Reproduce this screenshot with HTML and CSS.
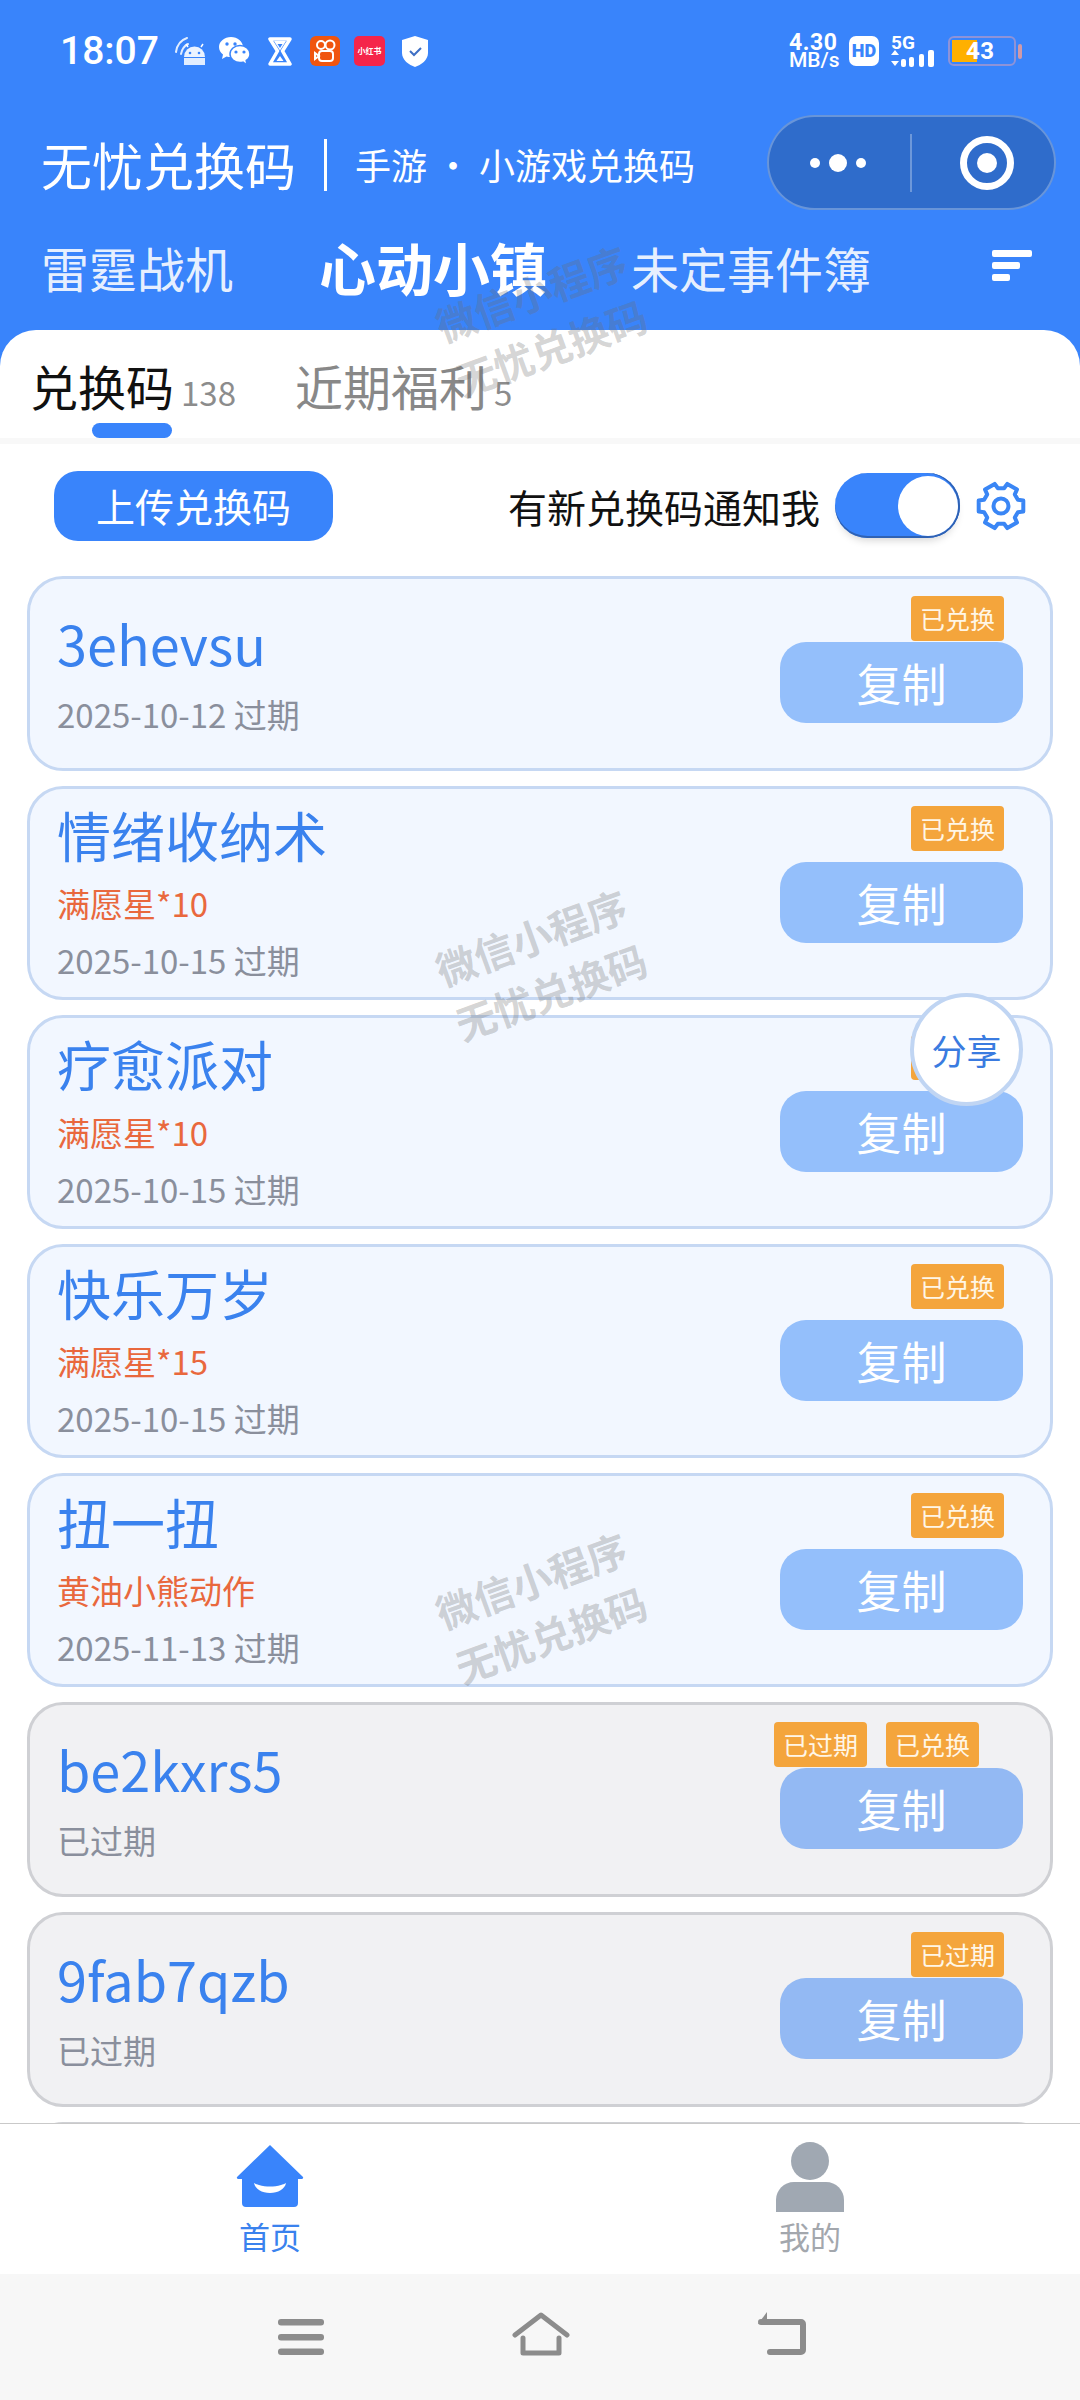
FILE: index.html
```html
<!DOCTYPE html>
<html lang="zh-CN">
<head>
<meta charset="utf-8">
<title>无忧兑换码</title>
<link rel="stylesheet" href="styles.css">
</head>
<body>
<div class="phone">
  <header class="top">
    <div class="status">
      <div class="status-left">
        <span class="time">18:07</span>
        <svg class="si si-droid" viewBox="0 0 31 29"><path d="M2 15C3 8 7 3 13 1M7 17C8 12 10 9 14 7" fill="none" stroke="#fff" stroke-width="2" stroke-linecap="round" opacity=".85"/><path d="M10 20a10.500 10.500 0 0 1 21 0z" fill="#fff" opacity=".9"/><path d="M10 21h21v7H10z" fill="#fff" opacity=".85"/><circle cx="16" cy="16" r="1.300" fill="#3984fb"/><circle cx="25" cy="16" r="1.300" fill="#3984fb"/><path d="M14 10l-2-3M27 10l2-3" stroke="#fff" stroke-width="1.500"/></svg>
        <svg class="si si-wechat" viewBox="0 0 31 30"><path d="M12 1C5.500 1 0 5.500 0 11c0 3 1.600 5.600 4 7.400L3 23l4.500-2.500c1.500.4 3 .6 4.500.6 6.500 0 12-4.500 12-10S18.500 1 12 1z" fill="#fff"/><circle cx="8" cy="8" r="1.700" fill="#3984fb"/><circle cx="16" cy="8" r="1.700" fill="#3984fb"/><path d="M21 9.500c-5.500 0-10 3.800-10 8.500s4.500 8.500 10 8.500c1 0 2-.1 3-.4L28 29l-.8-4.500c2.300-1.500 3.800-3.900 3.800-6.500 0-4.700-4.500-8.500-10-8.500z" fill="#fff" stroke="#3984fb" stroke-width="1.500"/><circle cx="17" cy="16" r="1.600" fill="#3984fb"/><circle cx="25" cy="16" r="1.600" fill="#3984fb"/></svg>
        <svg class="si si-hour" viewBox="0 0 24 29"><path d="M2 2h20l-7.500 12L22 27H2l7.500-13z" fill="none" stroke="#fff" stroke-width="3.500" stroke-linejoin="round"/><path d="M6 4h12l-6 9.500z" fill="#fff"/><path d="M9.500 7h5L12 11z" fill="#3984fb"/><path d="M12 19l3.500 5h-7z" fill="#fff"/></svg>
        <svg class="si si-kwai" viewBox="0 0 30 30"><rect width="30" height="30" rx="6" fill="#f0550f"/><circle cx="11" cy="9" r="4" fill="none" stroke="#fff" stroke-width="2"/><circle cx="20" cy="9" r="4.500" fill="none" stroke="#fff" stroke-width="2"/><rect x="9" y="15" width="14" height="10" rx="3" fill="none" stroke="#fff" stroke-width="2"/><path d="M9 20l-4-3v6z" fill="none" stroke="#fff" stroke-width="2"/></svg>
        <span class="red-note">小红书</span>
        <svg class="si si-shield" viewBox="0 0 26 31"><path d="M13 0l13 4v13c0 7-7 12-13 14C7 29 0 24 0 17V4z" fill="#fff"/><path d="M8 15l4 4 7-7" fill="none" stroke="#3e6fc4" stroke-width="2"/></svg>
      </div>
      <div class="status-right">
        <span class="speed"><b>4.30</b><i>MB/s</i></span>
        <span class="hd">HD</span>
        <span class="net">
          <b class="net-5g">5G</b>
          <svg class="net-bars" viewBox="0 0 44 17"><path d="M4 0l4 5H0zM4 16L0 11h8z" fill="#fff"/><rect x="10" y="9" width="5" height="8" rx="2" fill="#fff"/><rect x="18" y="7" width="5" height="10" rx="2" fill="#fff"/><rect x="28" y="4" width="5" height="13" rx="2" fill="#fff"/><rect x="37" y="0" width="6" height="17" rx="2" fill="#fff"/></svg>
        </span>
        <span class="battery"><span class="battery-fill"></span><span class="battery-num">43</span></span>
        <span class="battery-cap"></span>
      </div>
    </div>
    <div class="titlebar">
      <span class="app-name">无忧兑换码</span>
      <span class="app-sep"></span>
      <span class="app-sub">手游<span class="dot">・</span>小游戏兑换码</span>
      <div class="capsule">
        <svg class="cap-more" viewBox="0 0 70 20"><circle cx="12" cy="10" r="5" fill="#fff"/><circle cx="35" cy="10" r="9" fill="#fff"/><circle cx="58" cy="10" r="5" fill="#fff"/></svg>
        <span class="cap-sep"></span>
        <svg class="cap-target" viewBox="0 0 54 54"><circle cx="27" cy="27" r="23.500" fill="none" stroke="#fff" stroke-width="7"/><circle cx="27" cy="27" r="10" fill="#fff"/></svg>
      </div>
    </div>
    <nav class="games">
      <span class="game">雷霆战机</span>
      <span class="game game-on">心动小镇</span>
      <span class="game">未定事件簿</span>
      <svg class="sort" viewBox="0 0 40 32"><rect width="40" height="7" rx="2" fill="#fff"/><rect y="12" width="28" height="7" rx="2" fill="#fff"/><rect y="24" width="18" height="7" rx="2" fill="#fff"/></svg>
    </nav>
  </header>

  <main class="sheet">
    <div class="tabs">
      <div class="tab-first">
        <div class="tab-row"><span class="tab-label tab-label-on">兑换码</span><span class="tab-count">138</span></div>
        <span class="tab-bar"></span>
      </div>
      <div class="tab-row"><span class="tab-label">近期福利</span><span class="tab-count">5</span></div>
    </div>
    <div class="toolbar">
      <span class="upload">上传兑换码</span>
      <div class="notify">
        <span class="notify-text">有新兑换码通知我</span>
        <span class="switch"><span class="knob"></span></span>
        <svg class="gear" viewBox="-27 -27 54 54"><path d="M22.300 5.600L16.900 6.200 13.800 11.600 16 16.500 6.300 22.100 3.100 17.700-3.100 17.700-6.300 22.100-16 16.500-13.800 11.600-16.900 6.200-22.300 5.600-22.300-5.600-16.900-6.200-13.800-11.600-16-16.500-6.300-22.100-3.100-17.700 3.100-17.700 6.300-22.100 16-16.500 13.800-11.600 16.900-6.200 22.300-5.600z" fill="none" stroke="#3a86f5" stroke-width="4" stroke-linejoin="round"/><circle r="7.500" fill="none" stroke="#3a86f5" stroke-width="4"/></svg>
      </div>
    </div>
    <div class="list">
      <article class="card">
        <div class="info"><div class="code">3ehevsu</div><div class="date">2025-10-12 过期</div></div>
        <div class="side"><div class="tags"><span class="tag">已兑换</span></div><span class="copy">复制</span></div>
      </article>
      <article class="card card-tall">
        <div class="info"><div class="code">情绪收纳术</div><div class="gift">满愿星*10</div><div class="date">2025-10-15 过期</div></div>
        <div class="side"><div class="tags"><span class="tag">已兑换</span></div><span class="copy">复制</span></div>
      </article>
      <article class="card card-tall">
        <div class="info"><div class="code">疗愈派对</div><div class="gift">满愿星*10</div><div class="date">2025-10-15 过期</div></div>
        <div class="side"><div class="tags"><span class="tag">已兑换</span></div><span class="copy">复制</span></div>
      </article>
      <article class="card card-tall">
        <div class="info"><div class="code">快乐万岁</div><div class="gift">满愿星*15</div><div class="date">2025-10-15 过期</div></div>
        <div class="side"><div class="tags"><span class="tag">已兑换</span></div><span class="copy">复制</span></div>
      </article>
      <article class="card card-tall">
        <div class="info"><div class="code">扭一扭</div><div class="gift">黄油小熊动作</div><div class="date">2025-11-13 过期</div></div>
        <div class="side"><div class="tags"><span class="tag">已兑换</span></div><span class="copy">复制</span></div>
      </article>
      <article class="card card-old">
        <div class="info"><div class="code">be2kxrs5</div><div class="date">已过期</div></div>
        <div class="side"><div class="tags tags-two"><span class="tag">已过期</span><span class="tag">已兑换</span></div><span class="copy">复制</span></div>
      </article>
      <article class="card card-old">
        <div class="info"><div class="code">9fab7qzb</div><div class="date">已过期</div></div>
        <div class="side"><div class="tags"><span class="tag">已过期</span></div><span class="copy">复制</span></div>
      </article>
      <article class="card card-old"></article>
    </div>
  </main>

  <footer class="tabbar">
    <div class="tb-item tb-on">
      <svg class="tb-home" viewBox="0 0 68 62"><path d="M34 0L67 32a1.500 1.500 0 0 1-1 2h-4v24a4 4 0 0 1-4 4H10a4 4 0 0 1-4-4V34H2a1.500 1.500 0 0 1-1-2z" fill="#3984fb"/><path d="M18 38c2 1 3 1.500 5 2 7 2 15 2 22 0 2-.5 3-1 5-2-1 6-8 10-16 10s-15-4-16-10z" fill="#fff"/></svg>
      <span>首页</span>
    </div>
    <div class="tb-item">
      <svg class="tb-me" viewBox="0 0 68 70"><circle cx="34" cy="19" r="19" fill="#a0a8b2"/><path d="M0 70V58c0-10 8-18 18-18h32c10 0 18 8 18 18v12z" fill="#a0a8b2"/></svg>
      <span>我的</span>
    </div>
  </footer>
  <div class="sysnav">
    <svg class="nav-menu" viewBox="0 0 46 36"><rect width="46" height="6.500" rx="3" fill="#8c8c8c"/><rect y="15" width="46" height="6.500" rx="3" fill="#8c8c8c"/><rect y="29.500" width="46" height="6.500" rx="3" fill="#8c8c8c"/></svg>
    <svg class="nav-home" viewBox="0 0 58 44"><path d="M3 23L29 3l26 20M11 26v15h36V26" fill="none" stroke="#8c8c8c" stroke-width="5" stroke-linejoin="round" stroke-linecap="round"/></svg>
    <svg class="nav-back" viewBox="0 0 48 43"><path d="M3 10h40a2 2 0 0 1 2 2v26a2 2 0 0 1-2 2H12" fill="none" stroke="#8c8c8c" stroke-width="6" stroke-linecap="round"/><path d="M0 12L9 0v12z" fill="#8c8c8c"/></svg>
  </div>

  <div class="mark mark-a"><span>微信小程序</span><span>无忧兑换码</span></div>
  <div class="mark mark-b"><span>微信小程序</span><span>无忧兑换码</span></div>
  <div class="mark mark-c"><span>微信小程序</span><span>无忧兑换码</span></div>
  <div class="share">分享</div>
</div>
</body>
</html>
```
FILE: styles.css
```css
* { box-sizing: border-box; }
html, body { margin: 0; padding: 0; }
body { width: 1080px; height: 2400px; overflow: hidden; font-family: "Noto Sans CJK SC", "Noto Sans", sans-serif; }
.phone { position: relative; width: 1080px; height: 2400px; display: flex; flex-direction: column; background: #3984fb; overflow: hidden; }

.top { height: 330px; flex: none; color: #fff; }
.status { height: 102px; padding: 36px 58px 0 60px; display: flex; justify-content: space-between; align-items: flex-start; }
.status-left { display: flex; align-items: center; height: 30px; }
.time { font: 500 39px/30px Roboto, sans-serif; width: 114px; white-space: nowrap; }
.si { display: block; flex: none; }
.si-droid { width: 31px; height: 29px; margin-right: 14px; }
.si-wechat { width: 31px; height: 30px; margin-right: 18px; }
.si-hour { width: 24px; height: 29px; margin-right: 18px; }
.si-kwai { width: 30px; height: 30px; margin-right: 14px; }
.red-note { width: 31px; height: 30px; margin-right: 17px; background: #f5254a; border-radius: 5px; color: #fff; font-size: 8px; line-height: 30px; text-align: center; font-weight: 700; white-space: nowrap; }
.si-shield { width: 26px; height: 31px; }
.status-right { display: flex; align-items: flex-start; height: 30px; }
.speed { display: flex; flex-direction: column; width: 60px; margin-top: -3px; font-family: Roboto, sans-serif; }
.speed b { font-size: 23px; line-height: 19px; font-weight: 700; letter-spacing: .6px; }
.speed i { font-size: 21px; line-height: 17px; font-style: normal; font-weight: 500; }
.hd { width: 30px; height: 30px; background: #fff; border-radius: 7px; color: #3984fb; font: 900 18px/30px Roboto, sans-serif; text-align: center; margin-right: 12px; }
.net { width: 45px; margin-right: 12px; display: flex; flex-direction: column; }
.net-5g { font: 700 19px/14px Roboto, sans-serif; }
.net-bars { width: 44px; height: 17px; display: block; }
.battery { position: relative; width: 68px; height: 30px; border: 2px solid #8f93d8; border-radius: 6px; }
.battery-fill { position: absolute; left: 2px; top: 2px; bottom: 2px; width: 25px; background: #ffb000; }
.battery-num { position: absolute; left: 16px; top: -2px; font: 700 24px/30px Roboto, sans-serif; color: #fff; letter-spacing: .5px; }
.battery-cap { width: 4px; height: 15px; margin: 8px 0 0 2px; background: #d09aa8; border-radius: 2px; }

.titlebar { height: 96px; padding-left: 41px; padding-top: 13px; display: flex; align-items: flex-start; position: relative; }
.app-name { font-size: 51px; line-height: 70px; margin-top: 14px; width: 283px; white-space: nowrap; }
.app-sep { width: 3px; height: 52px; margin-top: 24px; background: #fff; margin-right: 28px; }
.app-sub { font-size: 36px; line-height: 70px; margin-top: 14px; white-space: nowrap; }
.dot { display: inline-block; width: 52px; text-align: center; }
.capsule { margin-left: auto; margin-right: 24px; width: 289px; height: 95px; background: #2f6ccb; border: 2px solid rgba(255,255,255,.28); border-radius: 48px; display: flex; align-items: center; }
.cap-more { width: 70px; height: 20px; margin-left: 34px; }
.cap-sep { width: 2px; height: 58px; background: rgba(255,255,255,.3); margin-left: 37px; }
.cap-target { width: 54px; height: 54px; margin-left: 48px; }

.games { height: 100px; padding: 38px 48px 0 41px; display: flex; align-items: center; }
.game { font-size: 48px; line-height: 70px; color: rgba(255,255,255,.9); white-space: nowrap; }
.game-on { font-size: 57px; font-weight: 700; color: #fff; margin: -3px 84px 0 86px; }
.sort { width: 40px; height: 32px; margin-left: auto; margin-top: -3px; }

.sheet { height: 1793px; flex: none; background: #fff; border-radius: 36px 36px 0 0; overflow: hidden; }
.tabs { height: 108px; padding: 20px 0 0 30px; display: flex; gap: 59px; align-items: flex-start; }
.tab-first { display: flex; flex-direction: column; }
.tab-row { display: flex; align-items: baseline; height: 70px; }
.tab-label { font-size: 48px; line-height: 70px; color: #888; white-space: nowrap; }
.tab-label-on { color: #111; }
.tab-count { font-size: 33px; color: #8c8c8c; margin-left: 7px; line-height: 70px; }
.tab-bar { width: 80px; height: 15px; margin: 3px 0 0 62px; background: #3984fb; border-radius: 8px; }
.toolbar { height: 138px; border-top: 6px solid #f8f8f8; padding: 27px 52px 0 54px; display: flex; justify-content: space-between; align-items: flex-start; }
.upload { width: 279px; height: 70px; background: #3984fb; border-radius: 24px; color: #fff; font-size: 39px; line-height: 68px; text-align: center; white-space: nowrap; }
.notify { display: flex; align-items: flex-start; }
.notify-text { font-size: 39px; line-height: 70px; color: #111; white-space: nowrap; }
.switch { position: relative; width: 125px; height: 65px; margin: 2px 0 0 15px; background: #3984fb; border-radius: 33px; box-shadow: inset -2px 0 0 #2f62b4, inset 0 -2px 0 #2f62b4, 0 6px 8px -4px rgba(0,0,0,.18); }
.knob { position: absolute; right: 2px; top: 3px; width: 60px; height: 60px; border-radius: 50%; background: #fff; }
.gear { width: 54px; height: 54px; margin: 8px 0 0 14px; }

.list { display: flex; flex-direction: column; gap: 15px; padding: 0 27px; }
.card { flex: none; height: 195px; display: flex; justify-content: space-between; background: #f2f7ff; border: 3px solid #c6d8f3; border-radius: 36px; padding: 29px 27px 0 27px; }
.card-tall { height: 214px; padding-top: 11px; }
.card-old { background: #f1f1f3; border-color: #cfd0d4; }
.code { font-size: 54px; line-height: 70px; color: #3a82ee; white-space: nowrap; }
.date { font-size: 33px; line-height: 50px; color: #8a8f9c; margin-top: 11px; white-space: nowrap; }
.gift { font-size: 33px; line-height: 50px; color: #e9683d; margin-top: 8px; white-space: nowrap; }
.card-tall .date { margin-top: 7px; }
.side { width: 243px; margin-top: -12px; display: flex; flex-direction: column; align-items: flex-end; }
.card-tall .side { margin-top: 6px; }
.tags { display: flex; gap: 19px; margin-right: 19px; }
.tags-two { margin-right: 44px; }
.tag { width: 93px; height: 45px; background: #f4a53c; border-radius: 4px; color: #fff6e6; font-size: 25px; line-height: 44px; text-align: center; white-space: nowrap; }
.copy { width: 243px; height: 81px; margin-top: 1px; background: #94bffb; border-radius: 26px; color: #fff; font-size: 45px; line-height: 82px; text-align: center; }
.card-tall .copy { margin-top: 11px; }
.card-old .copy { background: #93b9f3; }

.tabbar { height: 151px; flex: none; background: #fff; border-top: 1px solid #c9c9c9; display: flex; }
.tb-item { width: 540px; display: flex; flex-direction: column; align-items: center; color: #a3a7ad; font-size: 31px; line-height: 40px; }
.tb-on { color: #3a82ee; }
.tb-home { width: 68px; height: 62px; margin-top: 21px; margin-bottom: 9px; }
.tb-me { width: 68px; height: 70px; margin-top: 18px; margin-bottom: 4px; }
.sysnav { height: 126px; flex: none; background: #f7f7f7; padding-top: 38px; display: flex; align-items: flex-start; }
.nav-menu { width: 46px; height: 36px; margin: 7px 0 0 278px; }
.nav-home { width: 58px; height: 44px; margin-left: 188px; }
.nav-back { width: 48px; height: 43px; margin-left: 188px; }

.mark { position: absolute; left: 391px; width: 300px; display: flex; flex-direction: column; align-items: center; transform: rotate(-20deg); color: rgba(110,110,110,.3); font-size: 40px; font-weight: 700; line-height: 58px; pointer-events: none; white-space: nowrap; }
.mark-a { top: 262px; }
.mark-b { top: 906px; }
.mark-c { top: 1549px; }
.share { position: absolute; left: 910px; top: 993px; width: 113px; height: 113px; border: 4px solid #c0d5f3; border-radius: 50%; background: #fff; color: #3a7be0; font-size: 35px; line-height: 105px; text-align: center; white-space: nowrap; }
```
